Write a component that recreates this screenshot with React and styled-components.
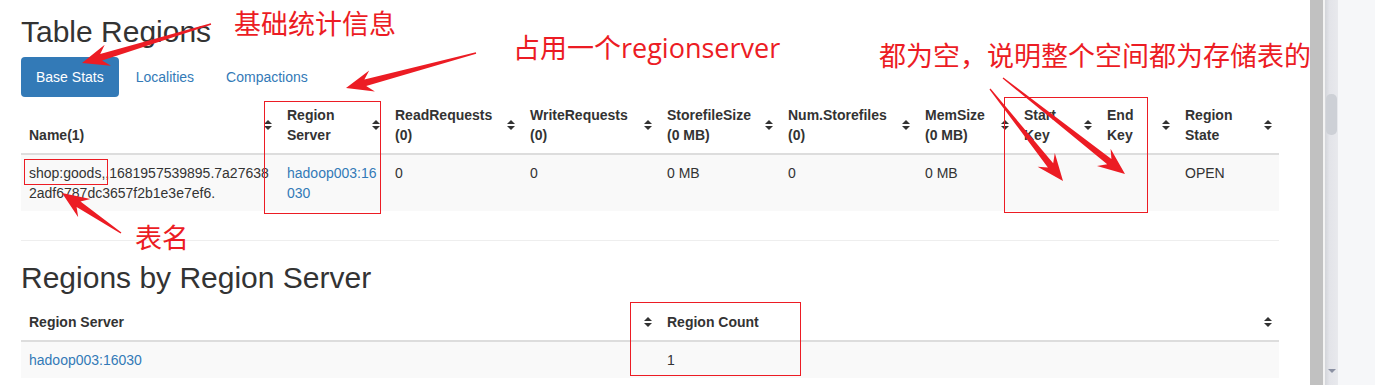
import React from "react";
import styled, {createGlobalStyle} from "styled-components";

const GlobalStyle = createGlobalStyle`
  html, body {
    margin: 0;
    padding: 0;
    background: #fff;
  }
  body {
    font-family: "Liberation Sans", Arial, sans-serif;
    font-size: 14px;
    line-height: 20px;
    color: #333;
  }
`;

const RED = "#ec1c24";

const Page = styled.div`
  position: relative;
  display: flex;
  width: 1375px;
  height: 385px;
  overflow: hidden;
`;

const Main = styled.div`
  flex: none;
  width: 1310px;
  box-sizing: border-box;
  padding-left: 21px;
  display: flex;
  flex-direction: column;
  background: #fff;
`;

const Title = styled.h2`
  margin: ${p => p.$top}px 0 ${p => p.$bottom}px;
  font-size: 30px;
  line-height: 33px;
  font-weight: 400;
  color: #333;
`;

const Pills = styled.ul`
  display: flex;
  margin: 0;
  padding: 0;
  list-style: none;
`;

const Pill = styled.li`
  & + & {
    margin-left: 2px;
  }
`;

const PillLink = styled.a`
  display: block;
  padding: 10px 15px;
  border-radius: 4px;
  font-size: 14px;
  line-height: 20px;
  text-decoration: none;
  color: ${p => (p.$active ? "#fff" : "#337ab7")};
  background: ${p => (p.$active ? "#337ab7" : "transparent")};
`;

const Table = styled.table`
  width: 1258px;
  table-layout: fixed;
  border-collapse: collapse;
  border-spacing: 0;
`;

const Th = styled.th`
  position: relative;
  padding: 8px;
  text-align: left;
  vertical-align: bottom;
  font-weight: bold;
  line-height: 20px;
  border-bottom: 2px solid #ddd;
`;

const Td = styled.td`
  padding: 8px;
  vertical-align: top;
  line-height: 20px;
  word-break: break-all;
`;

const StripedRow = styled.tr`
  background: #f9f9f9;
`;

const Link = styled.a`
  color: #337ab7;
  text-decoration: none;
`;

const SortIcon = styled.svg`
  position: absolute;
  right: 7px;
  top: 50%;
  margin-top: -5px;
`;

const Rule = styled.hr`
  width: 1258px;
  margin: 29px 0 0;
  border: 0;
  border-top: 1px solid #eee;
`;

const Divider = styled.div`
  flex: none;
  width: 13px;
  background: #c1c1c1;
  border-right: 2px solid #f3f3f3;
`;

const Track = styled.div`
  flex: none;
  width: 13px;
  display: flex;
  flex-direction: column;
  align-items: center;
  background: linear-gradient(to right, #d3d5da, #e3e4e9 35%, #e8e9ed);
`;

const Thumb = styled.div`
  margin-top: 94px;
  width: 11px;
  height: 41px;
  border-radius: 5px;
  background: #cdd0d6;
`;

const DownArrow = styled.div`
  margin-top: auto;
  margin-bottom: 12px;
  width: 0;
  height: 0;
  border-left: 4px solid transparent;
  border-right: 4px solid transparent;
  border-top: 4px solid #8b91a3;
`;

const Gutter = styled.div`
  flex: 1;
  background: #f6f7f9;
`;

const Overlay = styled.svg`
  position: absolute;
  left: 0;
  top: 0;
  pointer-events: none;
`;

const Note = styled.div`
  position: absolute;
  left: ${p => p.$x}px;
  top: ${p => p.$y}px;
  font-family: "Open Sans", "Noto Sans CJK SC", sans-serif;
  font-size: 27px;
  line-height: 27px;
  color: ${RED};
  white-space: nowrap;
  pointer-events: none;
`;

const Frame = styled.div`
  position: absolute;
  left: ${p => p.$x}px;
  top: ${p => p.$y}px;
  width: ${p => p.$w}px;
  height: ${p => p.$h}px;
  box-sizing: border-box;
  border: 1px solid ${RED};
  pointer-events: none;
`;

const Sort = () => (
    <SortIcon width="8" height="10" viewBox="0 0 8 10">
        <polygon points="0,4 4,0 8,4" fill="#333"/>
        <polygon points="0,6 4,10 8,6" fill="#333"/>
    </SortIcon>
);

const regionCols = [
    {w: 258, label: ["Name(1)"]},
    {w: 108, label: ["Region", "Server"]},
    {w: 135, label: ["ReadRequests", "(0)"]},
    {w: 137, label: ["WriteRequests", "(0)"]},
    {w: 121, label: ["StorefileSize", "(0 MB)"]},
    {w: 137, label: ["Num.Storefiles", "(0)"]},
    {w: 99, label: ["MemSize", "(0 MB)"]},
    {w: 83, label: ["Start", "Key"]},
    {w: 78, label: ["End", "Key"]},
    {w: 102, label: ["Region", "State"]},
];

const regionRow = [
    "shop:goods,,1681957539895.7a276382adf6787dc3657f2b1e3e7ef6.",
    <Link href="#">hadoop003:16030</Link>,
    "0", "0", "0 MB", "0", "0 MB", "", "", "OPEN",
];

// tapered red arrow, tail -> tip
function arrow(tx, ty, px, py, head = 27, half = 11, neck = 3.4, tail = 0.7, notch = 7) {
    const dx = px - tx, dy = py - ty;
    const len = Math.hypot(dx, dy);
    const ux = dx / len, uy = dy / len;
    const nx = -uy, ny = ux;
    const at = (d, s) => [px - ux * d + nx * s, py - uy * d + ny * s];
    const pts = [
        [tx + nx * tail, ty + ny * tail],
        at(head - notch, neck),
        at(head, half),
        [px, py],
        at(head, -half),
        at(head - notch, -neck),
        [tx - nx * tail, ty - ny * tail],
    ];
    return pts.map(p => p.map(v => v.toFixed(1)).join(",")).join(" ");
}

const arrows = [
    [211, 24, 82, 63],
    [476, 53, 346, 88],
    [990, 89, 1063, 181],
    [1003, 78, 1125, 174],
    [121, 233, 62, 193],
];

const App = () => (
    <Page>
        <GlobalStyle/>
        <Main>
            <Title $top={15} $bottom={9}>Table Regions</Title>
            <Pills>
                <Pill><PillLink href="#" $active>Base Stats</PillLink></Pill>
                <Pill><PillLink href="#">Localities</PillLink></Pill>
                <Pill><PillLink href="#">Compactions</PillLink></Pill>
            </Pills>
            <Table>
                <colgroup>
                    {regionCols.map((c, i) => <col key={i} style={{width: c.w}}/>)}
                </colgroup>
                <thead>
                <tr>
                    {regionCols.map((c, i) => (
                        <Th key={i}>
                            {c.label.map((l, j) => <React.Fragment key={j}>{j > 0 && <br/>}{l}</React.Fragment>)}
                            <Sort/>
                        </Th>
                    ))}
                </tr>
                </thead>
                <tbody>
                <StripedRow>
                    {regionRow.map((v, i) => <Td key={i}>{v}</Td>)}
                </StripedRow>
                </tbody>
            </Table>
            <Rule/>
            <Title $top={20} $bottom={10}>Regions by Region Server</Title>
            <Table>
                <colgroup>
                    <col style={{width: 638}}/>
                    <col style={{width: 620}}/>
                </colgroup>
                <thead>
                <tr>
                    <Th>Region Server<Sort/></Th>
                    <Th>Region Count<Sort/></Th>
                </tr>
                </thead>
                <tbody>
                <StripedRow>
                    <Td><Link href="#">hadoop003:16030</Link></Td>
                    <Td>1</Td>
                </StripedRow>
                </tbody>
            </Table>
        </Main>
        <Divider/>
        <Track>
            <Thumb/>
            <DownArrow/>
        </Track>
        <Gutter/>

        <Frame $x={24} $y={159} $w={84} $h={26}/>
        <Frame $x={264} $y={101} $w={117} $h={113}/>
        <Frame $x={1004} $y={97} $w={144} $h={116}/>
        <Frame $x={630} $y={302} $w={171} $h={74}/>

        <Note $x={234} $y={10}>基础统计信息</Note>
        <Note $x={513} $y={34}>占用一个regionserver</Note>
        <Note $x={879} $y={42}>都为空，说明整个空间都为存储表的</Note>
        <Note $x={135} $y={224}>表名</Note>

        <Overlay width="1375" height="385" viewBox="0 0 1375 385">
            {arrows.map((a, i) => <polygon key={i} points={arrow(...a)} fill={RED}/>)}
        </Overlay>
    </Page>
);

export default App;
